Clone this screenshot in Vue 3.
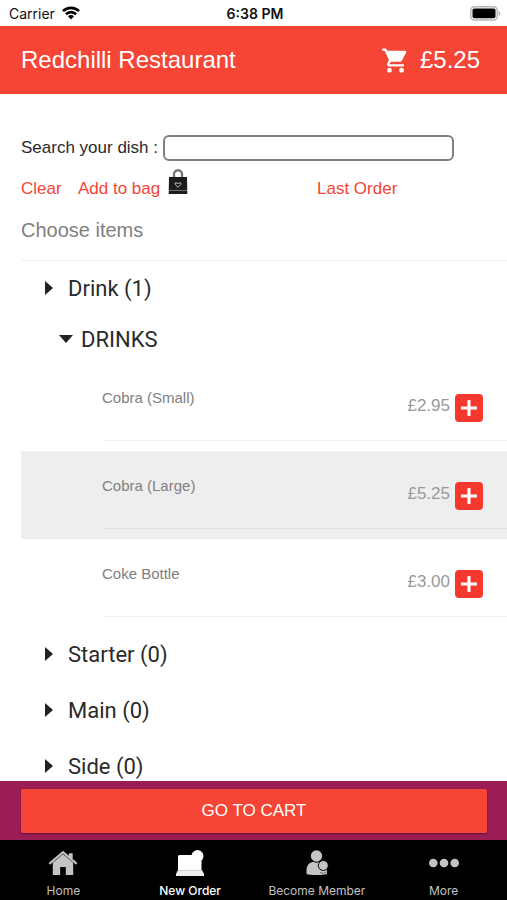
<script setup>
import { ref } from 'vue'

const query = ref('')
const dishes = ref([
  { name: 'Cobra (Small)', price: '£2.95', selected: false },
  { name: 'Cobra (Large)', price: '£5.25', selected: true },
  { name: 'Coke Bottle', price: '£3.00', selected: false }
])
const categories = ['Starter (0)', 'Main (0)', 'Side (0)']
</script>

<template>
  <div class="screen">
    <div class="status">
      <div class="carrier">
        <span>Carrier</span>
        <svg width="18" height="14" viewBox="0 0 18 14" aria-hidden="true">
          <g fill="none" stroke="#000" stroke-width="2.7">
            <path d="M1 5.1a11.3 11.3 0 0 1 16 0" />
            <path d="M3.9 8.2a7.2 7.2 0 0 1 10.2 0" />
          </g>
          <path d="M6 10.2a4.2 4.2 0 0 1 6 0L9 13.4z" fill="#000" />
        </svg>
      </div>
      <strong class="clock">6:38 PM</strong>
      <svg class="battery" width="31" height="15" viewBox="0 0 31 15" aria-hidden="true">
        <rect x="0.8" y="0.8" width="26.4" height="13.2" rx="3.6" fill="#fff" stroke="#b4b4b4" stroke-width="1.4" />
        <rect x="2.5" y="2.5" width="23" height="9.8" rx="2" fill="#000" />
        <path d="M28.6 5c2 .7 2 4.300 0 5z" fill="#a9a9a9" />
      </svg>
    </div>

    <header class="bar">
      <h1>Redchilli Restaurant</h1>
      <a class="basket" href="#cart" aria-label="Cart">
        <svg width="29" height="29" viewBox="0 0 24 24" fill="#fff" aria-hidden="true">
          <path d="M7 18c-1.100 0-1.990.9-1.990 2S5.900 22 7 22s2-.9 2-2-.9-2-2-2zM1 2v2h2l3.600 7.590-1.350 2.450c-.16.280-.25.610-.25.960 0 1.100.9 2 2 2h12v-2H7.420c-.14 0-.25-.11-.25-.25l.03-.12.900-1.630h7.450c.750 0 1.410-.41 1.750-1.030l3.580-6.490A1 1 0 0 0 20 4H5.210l-.94-2H1zm16 16c-1.100 0-1.990.9-1.990 2s.89 2 1.990 2 2-.9 2-2-.9-2-2-2z" />
        </svg>
        <span>£5.25</span>
      </a>
    </header>

    <main class="content">
      <div class="search">
        <label for="dish">Search your dish :</label>
        <input id="dish" v-model="query" type="text" />
      </div>
      <div class="links">
        <a href="#clear" @click.prevent="query = ''">Clear</a>
        <a class="bag" href="#bag">
          <span>Add to bag</span>
          <svg width="20" height="26" viewBox="0 0 20 26" aria-hidden="true">
            <path d="M6 9V5.200a4 4 0 0 1 8 0V9" fill="none" stroke="#77787a" stroke-width="2.400" />
            <path d="M1 8h18l.3 17H.7z" fill="#1c1c1e" />
            <path d="M1 21.500h18" stroke="#77787a" stroke-width=".9" />
            <path d="M10 18.300 7.200 15.500V14h2l.8.800.8-.8h2v1.500z" fill="none" stroke="#c4c4c4" stroke-width="1" />
          </svg>
        </a>
        <a class="last" href="#last-order">Last Order</a>
      </div>
      <h2>Choose items</h2>

      <section class="menu">
        <button class="category" type="button">
          <svg width="8" height="14" viewBox="0 0 8 14" aria-hidden="true"><path d="M0 0l8 7-8 7z" fill="#222" /></svg>
          <span>Drink (1)</span>
        </button>
        <button class="group" type="button">
          <svg width="14" height="8" viewBox="0 0 14 8" aria-hidden="true"><path d="M0 0h14L7 8z" fill="#222" /></svg>
          <span>DRINKS</span>
        </button>
        <ul>
          <li v-for="dish in dishes" :key="dish.name" :class="{ selected: dish.selected }">
            <div class="dish">
              <span class="name">{{ dish.name }}</span>
              <span class="price">{{ dish.price }}</span>
              <button class="add" type="button" :aria-label="'Add ' + dish.name" @click="dish.selected = true">
                <svg width="16" height="16" viewBox="0 0 16 16" aria-hidden="true">
                  <path d="M8 0v16M0 8h16" stroke="#fff" stroke-width="3" />
                </svg>
              </button>
            </div>
          </li>
        </ul>
        <button v-for="category in categories" :key="category" class="category" type="button">
          <svg width="8" height="14" viewBox="0 0 8 14" aria-hidden="true"><path d="M0 0l8 7-8 7z" fill="#222" /></svg>
          <span>{{ category }}</span>
        </button>
      </section>
    </main>

    <div class="checkout">
      <button type="button">GO TO CART</button>
    </div>

    <nav class="tabs">
      <a href="#home">
        <svg width="30" height="28" viewBox="0 0 30 28" fill="#c4c4c4" aria-hidden="true">
          <path d="M15 2 .8 14l1.200 1.400L15 4.500l13 10.900 1.200-1.400-4.700-4V4.500H21V7z" stroke="#c4c4c4" stroke-width=".4" />
          <path d="M15 5.200 4.800 13.800V26h7.400v-8h5.600v8h7.400V13.800z" />
        </svg>
        <span>Home</span>
      </a>
      <a class="active" href="#new-order">
        <svg width="30" height="28" viewBox="0 0 30 28" aria-hidden="true">
          <path d="M4 6h12.500A6 6 0 1 1 26.500 11.500V21H3V7z" fill="#fff" />
          <path d="M3 21h24l2 4v2H1v-2z" fill="#efefef" />
          <path d="M3 21.500h24" stroke="#bbb" stroke-width=".6" />
        </svg>
        <span>New Order</span>
      </a>
      <a href="#member">
        <svg width="30" height="28" viewBox="0 0 30 28" fill="#c4c4c4" aria-hidden="true">
          <circle cx="14.500" cy="7" r="5.700" />
          <path d="M4.500 25v-3.500c0-6 3.500-8.500 7.500-8.500 1.200 1 3.500 1 4.800 0 8.200 1 8.200 6 8.200 12-4 1.300-17 1.300-20.500 0z" />
          <circle cx="21.300" cy="16.500" r="5" stroke="#000" stroke-width="1" />
          <path d="M18 23.500q3.500 1.500 6 0" fill="none" stroke="#000" stroke-width=".4" />
        </svg>
        <span>Become Member</span>
      </a>
      <a href="#more">
        <svg width="30" height="28" viewBox="0 0 30 28" fill="#c4c4c4" aria-hidden="true">
          <circle cx="4.300" cy="14" r="4.300" /><circle cx="15" cy="14" r="4.300" /><circle cx="25.700" cy="14" r="4.300" />
        </svg>
        <span>More</span>
      </a>
    </nav>
  </div>
</template>

<style>
body {
  margin: 0;
  background: #fff;
}
</style>

<style scoped>
.screen {
  display: flex;
  flex-direction: column;
  height: 100vh;
  font-family: "Liberation Sans", Arial, sans-serif;
  color: #2a2a2a;
  background: #fff;
}
.screen *,
.screen {
  box-sizing: border-box;
}
svg {
  display: block;
  flex: none;
}
a {
  color: inherit;
  text-decoration: none;
}
button {
  font: inherit;
  color: inherit;
  border: 0;
  background: none;
  padding: 0;
  cursor: pointer;
}
.status {
  flex: none;
  display: grid;
  grid-template-columns: 1fr auto 1fr;
  align-items: center;
  height: 26px;
  padding: 0 6px 0 9px;
  font-family: Inter, sans-serif;
  font-size: 14px;
  color: #111;
}
.carrier {
  display: flex;
  align-items: center;
  gap: 7px;
}
.clock {
  font-weight: 600;
}
.battery {
  justify-self: end;
}
.bar {
  flex: none;
  display: flex;
  align-items: center;
  justify-content: space-between;
  height: 68px;
  padding: 0 27px 0 21px;
  background: #f64435;
  color: #fff;
  font-size: 24px;
}
h1 {
  margin: 0;
  font-size: 24px;
  font-weight: 400;
}
.basket {
  display: flex;
  align-items: center;
  gap: 10px;
}
.content {
  flex: 1;
  min-height: 0;
  overflow: hidden;
  padding: 41px 0 0 21px;
}
.search {
  display: flex;
  align-items: center;
  gap: 5px;
  padding-right: 53px;
}
label {
  font-size: 17px;
  line-height: 24px;
}
.search input {
  flex: 1;
  min-width: 0;
  height: 26px;
  padding: 0 6px;
  font: inherit;
  border: 2px solid #808080;
  border-radius: 6px;
  background: #fff;
}
.links {
  display: grid;
  grid-template-columns: 57px 1fr 190px;
  align-items: center;
  height: 40px;
  margin-top: 8px;
  font-size: 17px;
  color: #f64435;
}
.bag {
  display: flex;
  align-items: center;
  gap: 8px;
}
.bag svg {
  margin-bottom: 14px;
}
h2 {
  margin: 9px 0 18px;
  font-size: 20px;
  line-height: 24px;
  font-weight: 400;
  color: #808080;
}
.menu {
  border-top: 1px solid #f0f0f0;
}
.category,
.group {
  display: flex;
  align-items: center;
  width: 100%;
  padding-bottom: 2px;
  font-family: Roboto, sans-serif;
  font-size: 22px;
}
.category {
  height: 56px;
  gap: 15px;
  padding-left: 24px;
}
.group {
  height: 46px;
  gap: 8px;
  padding-left: 38px;
}
ul {
  margin: 0;
  padding: 0;
  list-style: none;
}
li {
  padding: 0 0 10px 81px;
  height: 88px;
}
li.selected {
  background: #eee;
}
.dish {
  display: flex;
  align-items: center;
  height: 78px;
  padding: 12px 24px 0 0;
  border-bottom: 1px solid rgba(0, 0, 0, 0.05);
  color: #808080;
}
.name {
  flex: 1;
  font-size: 15px;
  padding-bottom: 20px;
}
.price {
  font-size: 17px;
  padding-bottom: 4px;
  margin-right: 5px;
  color: #999;
}
.add {
  display: grid;
  place-items: center;
  width: 28px;
  height: 28px;
  border-radius: 4px;
  background: #f6392e;
}
.checkout {
  flex: none;
  padding: 8px 20px 7px 21px;
  background: #9c1c55;
}
.checkout button {
  display: block;
  width: 100%;
  height: 44px;
  border-radius: 2px;
  background: #f64435;
  color: #fff;
  font-size: 17px;
  box-shadow: 0 1px 2px rgba(0, 0, 0, 0.4);
}
.tabs {
  flex: none;
  display: grid;
  grid-template-columns: repeat(4, 1fr);
  height: 60px;
  padding-top: 9px;
  background: #000;
  color: #c0c0c0;
  font-family: Inter, sans-serif;
  font-size: 12px;
}
.tabs a {
  display: flex;
  flex-direction: column;
  align-items: center;
  gap: 6px;
  line-height: 16px;
}
.tabs .active {
  color: #fff;
  font-weight: 500;
}
</style>
